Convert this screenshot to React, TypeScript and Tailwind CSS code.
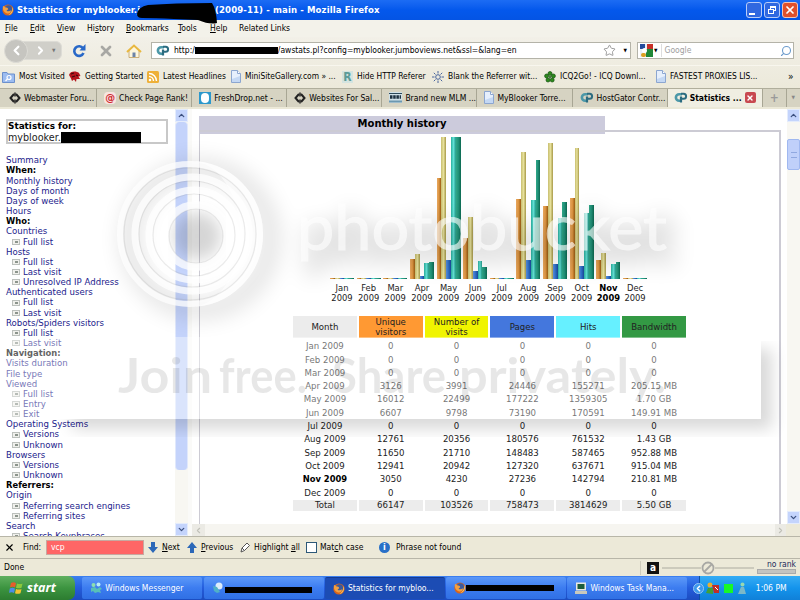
import React from 'react';
import { ChevronDown, ChevronUp, ChevronLeft, ChevronRight, Star, Search, X } from 'lucide-react';
import clsx from 'clsx';

const months = [
  { name: 'Jan', bars: [1, 1, 1, 1, 1], row: ['0', '0', '0', '0', '0'] },
  { name: 'Feb', bars: [1, 1, 1, 1, 1], row: ['0', '0', '0', '0', '0'] },
  { name: 'Mar', bars: [1, 1, 1, 1, 1], row: ['0', '0', '0', '0', '0'] },
  { name: 'Apr', bars: [20, 25, 3, 16, 17], row: ['3126', '3991', '24446', '155271', '205.15 MB'] },
  { name: 'May', bars: [101, 142, 19, 142, 142], row: ['16012', '22499', '177222', '1359305', '1.70 GB'] },
  { name: 'Jun', bars: [41, 62, 8, 18, 12], row: ['6607', '9798', '73190', '170591', '149.91 MB'] },
  { name: 'Jul', bars: [1, 1, 1, 1, 1], row: ['0', '0', '0', '0', '0'] },
  { name: 'Aug', bars: [80, 127, 19, 79, 119], row: ['12761', '20356', '180576', '761532', '1.43 GB'] },
  { name: 'Sep', bars: [73, 136, 15, 61, 77], row: ['11650', '21710', '148483', '587465', '952.88 MB'] },
  { name: 'Oct', bars: [81, 131, 13, 66, 74], row: ['12941', '20942', '127320', '637671', '915.04 MB'] },
  { name: 'Nov', bars: [19, 26, 3, 15, 17], row: ['3050', '4230', '27236', '142794', '210.81 MB'], current: true },
  { name: 'Dec', bars: [1, 1, 1, 1, 1], row: ['0', '0', '0', '0', '0'] },
];

const barColors = [
  'bg-linear-to-r from-[#e8a860] via-[#dc9440] to-[#9a5c10]',
  'bg-linear-to-r from-[#c8be70] via-[#e6e09a] to-[#a89a48]',
  'bg-linear-to-r from-[#5a90dc] via-[#3070c8] to-[#1a4898]',
  'bg-linear-to-r from-[#28b0a0] via-[#60e0d4] to-[#209888]',
  'bg-linear-to-r from-[#30a888] via-[#209078] to-[#0c6850]',
];

const columns = [
  { label: 'Month', color: 'bg-[#ececec]' },
  { label: 'Unique visitors', color: 'bg-[#ff9933]' },
  { label: 'Number of visits', color: 'bg-[#f0f400]' },
  { label: 'Pages', color: 'bg-[#4477dd]' },
  { label: 'Hits', color: 'bg-[#66f0ff]' },
  { label: 'Bandwidth', color: 'bg-[#339944]' },
];

// h = heading, l = link, s = indented sub link
const sideMenu: [string, string][] = [
  ['l', 'Summary'], ['h', 'When:'], ['l', 'Monthly history'], ['l', 'Days of month'], ['l', 'Days of week'], ['l', 'Hours'],
  ['h', 'Who:'], ['l', 'Countries'], ['s', 'Full list'], ['l', 'Hosts'], ['s', 'Full list'], ['s', 'Last visit'],
  ['s', 'Unresolved IP Address'], ['l', 'Authenticated users'], ['s', 'Full list'], ['s', 'Last visit'],
  ['l', 'Robots/Spiders visitors'], ['s', 'Full list'], ['s', 'Last visit'], ['h', 'Navigation:'], ['l', 'Visits duration'],
  ['l', 'File type'], ['l', 'Viewed'], ['s', 'Full list'], ['s', 'Entry'], ['s', 'Exit'], ['l', 'Operating Systems'],
  ['s', 'Versions'], ['s', 'Unknown'], ['l', 'Browsers'], ['s', 'Versions'], ['s', 'Unknown'], ['h', 'Referrers:'],
  ['l', 'Origin'], ['s', 'Referring search engines'], ['s', 'Referring sites'], ['l', 'Search'], ['s', 'Search Keyphrases'],
];

const Firefox = () => (
  <svg viewBox="0 0 12 12" className="w-3 h-3 shrink-0">
    <circle cx="6" cy="6" r="5.6" fill="#d8641c" />
    <circle cx="6.4" cy="4.9" r="3.6" fill="#3c5a9c" />
    <path d="M1 2c1 .3 2 .6 2.6 1.6 1.6-.4 2.4.6 2.6 1.6L4.6 6.4c.8 1.4 3 1 4.2-.2C9.400 9 6.600 10 4.500 9.200 2 8.500.300 5.500 1 2z" fill="#f4a040" />
    <path d="M10.300 3c1.600 3 .200 7.500-4 8 2.500-1.500 4.300-4 4-8z" fill="#f6c860" />
  </svg>
);

const CPanel = () => (
  <svg viewBox="0 0 14 11" className="w-[14px] h-[11px] shrink-0" fill="none">
    <path d="M8 2.200H5.200a3.300 3.300 0 0 0 0 6.600H6" stroke="#4c98a8" strokeWidth="2.600" />
    <path d="M7 10.500V4.500" stroke="#2c6c80" strokeWidth="2.200" />
    <path d="M7 1.800h2.600a2.500 2.500 0 0 1 0 5H8" stroke="#2c6c80" strokeWidth="2" />
  </svg>
);

const Page = () => (
  <svg viewBox="0 0 10 13" className="w-[10px] h-[13px] shrink-0">
    <path d="M.5.5h6l3 3v9h-9z" fill="#e6effc" stroke="#8ca6d0" />
    <path d="M6.500.5v3h3" fill="#fff" stroke="#8ca6d0" />
    <path d="M1 9l8-3v6H1z" fill="#c4d8f4" />
  </svg>
);

const Diamond = () => (
  <svg viewBox="0 0 12 12" className="w-3 h-3 shrink-0" fill="none" stroke="#222" strokeWidth="2">
    <path d="M5 2L1.500 6L5 10M7 2l3.500 4L7 10" />
    <path d="M6 .5v4M6 7.500v4" strokeWidth="1.500" />
  </svg>
);

const Folder = () => (
  <svg viewBox="0 0 13 12" className="w-[13px] h-3">
    <path d="M.5 1.500h4.500l1 1.500h6.500v8.500H.5z" fill="#9cbcf0" stroke="#6c90cc" />
    <circle cx="7" cy="6.500" r="2" fill="none" stroke="#fff" strokeWidth="1.200" />
    <path d="M5.500 8L3.500 10" stroke="#fff" strokeWidth="1.300" />
  </svg>
);

const Started = () => (
  <svg viewBox="0 0 13 12" className="w-[13px] h-3">
    <path d="M1 4C2 0 8-.5 11 2l1.500 3-2 .5L12 8 8.500 8 8 11 6 8.500 4 10 3 7.500z" fill="#b4141c" />
    <path d="M3 3l3-1M4 6l3-1M8 4l2 1" stroke="#3c0a0c" strokeWidth="1.200" />
  </svg>
);

const Feed = () => (
  <svg viewBox="0 0 12 12" className="w-3 h-3" fill="none" stroke="#fff" strokeWidth="1.400">
    <rect width="12" height="12" rx="1.500" fill="#eeb038" stroke="none" />
    <path d="M2 5.500a4.500 4.500 0 0 1 4.500 4.500M2 2.500A7.500 7.500 0 0 1 9.500 10" />
    <circle cx="3" cy="9" r=".6" />
  </svg>
);

const Sun = () => (
  <svg viewBox="0 0 12 12" className="w-3 h-3" fill="none" stroke="#48649c">
    <circle cx="6" cy="6" r="2.300" />
    <path d="M6 0v2.500M6 9.500V12M0 6h2.500M9.500 6H12M1.800 1.800l1.700 1.700M8.500 8.500l1.700 1.700M10.200 1.800L8.500 3.500M3.500 8.500l-1.700 1.700" />
  </svg>
);

const Clover = () => (
  <svg viewBox="0 0 12 12" className="w-3 h-3">
    <g fill="#2c8a1c" stroke="#145010" strokeWidth=".7">
      <circle cx="6" cy="2.500" r="2" /><circle cx="2.600" cy="5" r="2" /><circle cx="9.400" cy="5" r="2" />
      <circle cx="4" cy="9" r="2" /><circle cx="8.200" cy="9" r="2" />
    </g>
    <circle cx="6" cy="6" r="1" fill="#145010" />
  </svg>
);

const LetterR = () => <span className="w-[11px] h-3 bg-[#d4e4e0] text-[#5c9c98] font-bold text-[12px] leading-3 text-center">R</span>;

const bookmarks = [
  { icon: <Folder />, label: 'Most Visited', width: 'w-[66px]' },
  { icon: <Started />, label: 'Getting Started', width: 'w-[79px]' },
  { icon: <Feed />, label: 'Latest Headlines', width: 'w-[84px]' },
  { icon: <Page />, label: 'MiniSiteGallery.com » ...', width: 'w-[111px]' },
  { icon: <LetterR />, label: 'Hide HTTP Referer', width: 'w-[90px]' },
  { icon: <Sun />, label: 'Blank the Referrer wit...', width: 'w-[112px]' },
  { icon: <Clover />, label: 'ICQ2Go! - ICQ Downl...', width: 'w-[112px]' },
  { icon: <Page />, label: 'FASTEST PROXIES LIS...', width: 'w-[132px]' },
];

const At = () => <span className="w-3 h-3 rounded-sm bg-[#f8e4e0] text-[#d02c34] text-[11px] leading-[11px] font-bold text-center">@</span>;
const Drop = () => <span className="w-3 h-3 bg-[#2c98cc] grid place-items-center shrink-0"><i className="w-2 h-2.5 rounded-full bg-white" /></span>;
const Mlm = () => (
  <svg viewBox="0 0 13 11" className="w-[13px] h-[11px]">
    <rect width="13" height="11" fill="#cfe0e8" />
    <path d="M0 9.500h13" stroke="#6c98b0" strokeWidth="2" />
    <path d="M0 1.500h13" stroke="#2c4858" />
    <path d="M1 5h11" stroke="#1c3040" strokeWidth="3.500" strokeDasharray="2.500 .7" />
  </svg>
);

const tabs = [
  { icon: <Diamond />, label: 'Webmaster Foru...' },
  { icon: <At />, label: 'Check Page Rank!' },
  { icon: <Drop />, label: 'FreshDrop.net - ...' },
  { icon: <Diamond />, label: 'Websites For Sal...' },
  { icon: <Mlm />, label: 'Brand new MLM ...' },
  { icon: <Page />, label: 'MyBlooker Torre...' },
  { icon: <CPanel />, label: 'HostGator Contr...' },
];

const menus = [
  ['', 'F', 'ile', 'w-[25px]'], ['', 'E', 'dit', 'w-[27px]'], ['', 'V', 'iew', 'w-[30px]'], ['Hi', 's', 'tory', 'w-[39px]'],
  ['', 'B', 'ookmarks', 'w-[52px]'], ['', 'T', 'ools', 'w-[32px]'], ['', 'H', 'elp', 'w-[29px]'], ['Related Links', '', '', 'w-[60px]'],
];

const TitleBar = () => (
  <div className="h-5 relative flex items-center pl-[2px] pr-[2px] bg-linear-to-b from-[#1c6cf4] via-[#0458ec] to-[#0454e4] text-white font-bold text-[9.5px] whitespace-nowrap">
    <Firefox />
    <span className="ml-[3px] w-[198px] tracking-[0.1px]">Statistics for myblooker.j</span>
    <span className="tracking-[0.12px]">(2009-11) - main - Mozilla Firefox</span>
    <div className="ml-auto flex gap-[2px]">
      <div className="w-4 h-4 rounded-[3px] border border-[#b8ccf8] bg-[#3068e0] flex items-end p-[2px]"><i className="w-[6px] h-[2px] bg-white" /></div>
      <div className="w-4 h-4 rounded-[3px] border border-[#b8ccf8] bg-[#3068e0] relative">
        <i className="absolute left-[5px] top-[3px] w-[6px] h-[5px] border border-t-2 border-white" />
        <i className="absolute left-[3px] top-[6px] w-[6px] h-[5px] border border-white bg-[#3068e0]" />
      </div>
      <div className="w-4 h-4 rounded-[3px] border border-[#f0c4b8] bg-[#e0502c] grid place-items-center"><X size={12} strokeWidth={3.5} /></div>
    </div>
    <svg className="absolute left-[134px] top-0 w-[86px] h-6 z-10" viewBox="0 0 86 24">
      <path d="M3 14Q4 7 14 5Q40 3 78 3Q82 9 83 23Q76 25 64 20L40 19Q20 18 8 18Q3 18 3 14z" fill="#000" />
    </svg>
  </div>
);

const NavBar = () => (
  <div className="h-7 flex items-center text-[8.5px]">
    <div className="relative w-[62px] h-6 flex items-center ml-[4px]">
      <div className="w-6 h-6 rounded-full bg-[#c6c5c0] border border-[#dddcd6] grid place-items-center text-white z-10"><ChevronLeft size={15} strokeWidth={3.5} /></div>
      <div className="-ml-2 w-[42px] h-[19px] rounded-r-md bg-[#d0cfc9] border border-[#dddcd6] flex items-center pl-[13px] text-white">
        <ChevronRight size={13} strokeWidth={3.5} />
        <span className="ml-[5px] text-[#777] text-[5px]">▼</span>
      </div>
    </div>
    <svg viewBox="0 0 14 14" className="w-[14px] h-[14px] ml-[6px]" fill="none">
      <path d="M11 4.300A4.800 4.800 0 1 0 11.500 9" stroke="#2868c8" strokeWidth="2.600" />
      <path d="M13.500 0v6.500H7.500z" fill="#2868c8" />
    </svg>
    <X size={16} strokeWidth={4} className="ml-[12px] text-[#a8a8a4]" />
    <svg viewBox="0 0 16 14" className="w-4 h-[14px] ml-[12px]">
      <path d="M3 6v7.500h10V6L8 2z" fill="#fdf6dc" stroke="#c0a060" strokeWidth=".8" />
      <path d="M1 8L8 1.500 15 8" fill="none" stroke="#e8b840" strokeWidth="2" />
      <path d="M6.500 13V8.500h3V13z" fill="#6c84a8" />
    </svg>
    <div className="ml-[9px] w-[480px] h-[17px] bg-white border border-[#b4b3a8] flex items-center whitespace-nowrap">
      <span className="w-[22px] pl-1"><CPanel /></span>
      <span>http:/</span>
      <i className="w-[83px] h-[7px] bg-black" />
      <span>/awstats.pl?config=myblooker.jumboviews.net&amp;ssl=&amp;lang=en</span>
      <Star size={13} strokeWidth={1.5} className="ml-auto mr-[8px] text-[#888] shrink-0" />
      <span className="text-[5px] mr-[3px]">▼</span>
    </div>
    <div className="ml-[6px] w-[157px] h-[17px] bg-white border border-[#b4b3a8] flex items-center">
      <div className="ml-[2px] w-[13px] h-[13px] relative bg-[#e8f0f8] overflow-hidden">
        <i className="absolute left-0 top-0 w-[5px] h-[5px] bg-[#244c9c]" />
        <i className="absolute right-0 top-0 w-[6px] h-[5px] bg-[#c83028]" />
        <i className="absolute right-0 top-[5px] w-[7px] h-2 bg-[#208838]" />
        <i className="absolute left-[2px] top-[4px] w-[5px] h-[5px] rounded-full bg-white" />
        <i className="absolute left-[1px] bottom-0 w-[5px] h-[4px] rounded-full bg-[#dca020]" />
      </div>
      <span className="text-[5px] ml-[1px]">▼</span>
      <span className="ml-[4px] pl-[2px] border-l border-[#ddd] text-[#a0a0a0]">Google</span>
      <Search size={12} strokeWidth={2.2} className="ml-auto mr-[1px] -scale-x-100 text-[#6c9ccc]" />
    </div>
  </div>
);

const Scroller = ({ children, className }: { children?: React.ReactNode; className?: string }) => (
  <div className={clsx('flex flex-col w-[13px] bg-[#f8f7f2] shrink-0', className)}>
    <div className="h-[13px] grid place-items-center bg-[#c4d4fc] border border-[#e4ecfc] text-[#3c5080]"><ChevronUp size={9} strokeWidth={3.5} /></div>
    <div className="flex-1 flex flex-col">{children}</div>
    <div className="h-[13px] grid place-items-center bg-[#c4d4fc] border border-[#e4ecfc] text-[#3c5080]"><ChevronDown size={9} strokeWidth={3.5} /></div>
  </div>
);

const Sidebar = () => (
  <div className="w-[188px] flex bg-white shrink-0">
    <div className="w-[175px] pl-[6px] pt-[10px] overflow-hidden text-[8.6px] whitespace-nowrap">
      <div className="w-[162px] h-[25px] border-2 border-[#c8c8c8] text-black leading-[11px]">
        <p className="font-bold text-[8.9px]">Statistics for:</p>
        <p className="flex items-center h-[10px] text-[9.6px] text-[#222]">myblooker.<i className="w-[80px] h-[11px] bg-black" /></p>
      </div>
      <ul className="mt-[11px]">
        {sideMenu.map(([kind, label], i) => (
          <li
            key={i}
            className={clsx(
              'h-[10.17px] leading-[10.17px] flex items-center',
              kind === 'h' ? 'font-bold text-black text-[8.4px]' : 'text-[#22228c]',
              kind === 's' && 'pl-[6px]'
            )}
          >
            {kind === 's' && (
              <span className="w-2 h-[6px] mr-[3px] border border-[#bcc0bc] bg-[#f0f0ec] grid place-items-center"><i className="w-[3px] h-[2px] bg-[#8c948c]" /></span>
            )}
            {label}
          </li>
        ))}
      </ul>
    </div>
    <Scroller>
      <div className="h-[348px] bg-[#c4d3fb] border-x border-[#e0e8fc] rounded-sm" />
    </Scroller>
  </div>
);

const Chart = () => (
  <div className="ml-[130px] mt-[3px] flex gap-[2.650px]">
    {months.map(m => (
      <div key={m.name} className="w-6">
        <div className="h-[142px] flex items-end">
          {m.bars.map((h, i) => (
            <div key={i} className={clsx('flex-1', barColors[i])} style={{ height: h }} />
          ))}
        </div>
        <p className={clsx('-mx-1 mt-[4px] text-center text-[8.400px] leading-[10px]', m.current ? 'font-bold text-black' : 'text-[#222]')}>
          {m.name}<br />2009
        </p>
      </div>
    ))}
  </div>
);

const Stats = () => (
  <div className="ml-[93px] mt-[13px] w-[393px] text-[8.600px] text-center text-[#222]">
    <div className="grid grid-cols-6 gap-x-[2px] h-[22px] mb-[2px]">
      {columns.map(c => (
        <div key={c.label} className={clsx('grid place-items-center px-2 leading-[10px]', c.color)}>{c.label}</div>
      ))}
    </div>
    {months.map(m => (
      <div key={m.name} className="grid grid-cols-6 gap-x-[2px] h-[13.300px] leading-[13.300px]">
        <span className={clsx(m.current && 'font-bold text-black text-[8.400px]')}>{m.name} 2009</span>
        {m.row.map((v, i) => <span key={i}>{v}</span>)}
      </div>
    ))}
    <div className="grid grid-cols-6 gap-x-[2px] h-[11px] leading-[11px]">
      {['Total', '66147', '103526', '758473', '3814629', '5.50 GB'].map(v => (
        <span key={v} className="bg-[#ececec]">{v}</span>
      ))}
    </div>
  </div>
);

const slogan = [
  { word: 'Join', x: 118, width: 94 },
  { word: 'free.', x: 219, width: 88 },
  { word: 'Share', x: 332, width: 114 },
  { word: 'privately.', x: 459, width: 207 },
];

const Watermark = () => (
  <svg className="absolute left-0 top-0 w-[800px] h-[427px] pointer-events-none" viewBox="0 110 800 427">
    <defs>
      <filter id="soft" x="-20%" y="-30%" width="140%" height="160%"><feGaussianBlur stdDeviation="11" /></filter>
      <filter id="bandBlur" x="-10%" y="-30%" width="120%" height="160%"><feGaussianBlur stdDeviation="8" /></filter>
      <mask id="outsideBand">
        <rect x="0" y="110" width="800" height="427" fill="#fff" />
        <rect x="0" y="338" width="761" height="82" fill="#000" />
        <rect x="0" y="110" width="761" height="230" fill="#000" />
      </mask>
    </defs>
    <g filter="url(#soft)" opacity=".12">
      <circle cx="200" cy="240" r="70" fill="none" stroke="#000" strokeWidth="18" />
      <text x="306" y="262" fontSize="64" textLength="368" lengthAdjust="spacingAndGlyphs" fontFamily="Lato" stroke="#000" strokeWidth="9">photobucket</text>
    </g>
    <circle cx="197" cy="237" r="24" filter="url(#bandBlur)" opacity=".16" />
    <g fill="none" stroke="#fff" opacity=".75">
      <circle cx="190" cy="235" r="70" strokeWidth="6" />
      <circle cx="192" cy="235" r="57" strokeWidth="7" />
      <circle cx="194" cy="236" r="45" strokeWidth="7" />
      <circle cx="196" cy="237" r="31" strokeWidth="8" />
    </g>
    <path d="M190 162A73 73 0 0 1 190 308A50 73 0 0 0 190 162z" fill="#fff" opacity=".6" />
    <g fill="none" stroke="#888" strokeWidth="1.200" opacity=".16">
      <circle cx="190" cy="235" r="66" /><circle cx="192" cy="235" r="53" /><circle cx="194" cy="236" r="41" /><circle cx="196" cy="237" r="27" />
    </g>
    <text x="297" y="251" fontSize="62" textLength="370" lengthAdjust="spacingAndGlyphs" fontFamily="Lato" fill="#fff" stroke="#fff" strokeWidth="1" opacity=".62">photobucket</text>
    <rect x="0" y="338" width="761" height="82" fill="#fff" opacity=".38" />
    <g mask="url(#outsideBand)">
      <rect x="72" y="350" width="700" height="80" filter="url(#bandBlur)" opacity=".15" />
    </g>
    <g fontSize="48" fontFamily="Lato" fontWeight="700" opacity=".09">
      {slogan.map(s => (
        <text key={s.word} x={s.x} y="394" textLength={s.width} lengthAdjust="spacingAndGlyphs">{s.word}</text>
      ))}
    </g>
  </svg>
);

const FindBar = () => (
  <div className="h-[22px] border-t border-[#b8b6a8] flex items-center text-[8.500px] whitespace-nowrap">
    <X size={11} strokeWidth={2.5} className="ml-[4px]" />
    <span className="ml-[8px] w-[23px]">Find:</span>
    <div className="w-[98px] h-[15px] bg-[#ff6666] border border-[#c8a8a0] text-white pl-1 leading-[13px]">vcp</div>
    <svg viewBox="0 0 10 11" className="w-[10px] h-[11px] ml-[4px]"><path d="M3 0h4v5h3L5 11 0 5h3z" fill="#2c68b8" /></svg>
    <span className="ml-[4px] w-[25px]"><u>N</u>ext</span>
    <svg viewBox="0 0 10 11" className="w-[10px] h-[11px]"><path d="M3 11h4V6h3L5 0 0 6h3z" fill="#2c68b8" /></svg>
    <span className="ml-[4px] w-[39px]"><u>P</u>revious</span>
    <svg viewBox="0 0 10 11" className="w-[10px] h-[11px]" fill="#fff" stroke="#555"><path d="M1 10l1-4 5-5 2.500 2.500-5 5zM2 6l2.500 2.500" /></svg>
    <span className="ml-[4px] w-[52px]">Highlight <u>a</u>ll</span>
    <i className="w-[11px] h-[11px] border border-[#2c5878] bg-white" />
    <span className="ml-[3px] w-[59px]">Mat<u>c</u>h case</span>
    <span className="w-[11px] h-[11px] rounded-full bg-[#2870c8] text-white font-bold text-center text-[9px] leading-[11px]">i</span>
    <span className="ml-[6px]">Phrase not found</span>
  </div>
);

const StatusBar = () => (
  <div className="h-[18px] border-t border-[#b8b6a8] flex items-center text-[8.500px] shrink-0">
    <span className="ml-[4px]">Done</span>
    <div className="ml-auto w-[160px] h-[14px] border-l border-[#cfccbc] flex items-center">
      <span className="ml-[6px] w-3 h-3 bg-[#111] text-white font-bold text-[10px] leading-3 text-center">a</span>
      <div className="ml-[3px] w-[92px] flex items-center">
        <i className="flex-1 h-[2px] bg-[#cccabc]" />
        <svg viewBox="0 0 14 14" className="w-[14px] h-[14px]" fill="none" stroke="#a8a8a4" strokeWidth="1.800"><circle cx="7" cy="7" r="5.500" /><path d="M3 11l8-8" /></svg>
        <i className="flex-1 h-[2px] bg-[#cccabc]" />
      </div>
      <div className="ml-[3px] w-[39px] flex flex-col -mt-[3px]">
        <span className="-mx-1 pr-1 text-right text-[8.500px] leading-[10px] text-[#1c2c5c] whitespace-nowrap">no rank</span>
        <i className="h-[5px] border border-[#aaa] bg-[#c4c4c0]" />
      </div>
    </div>
  </div>
);

const TaskButton = ({ icon, children, active }: { icon: React.ReactNode; children?: React.ReactNode; active?: boolean }) => (
  <div className={clsx(
    'w-[120px] h-[22px] rounded-[2px] flex items-center gap-[3px] pl-2 whitespace-nowrap shrink-0',
    active ? 'bg-[#1c4cb4] border-t border-[#143c94]' : 'bg-linear-to-b from-[#5c98f8] via-[#3c7cf0] to-[#3070e4]'
  )}>
    {icon}{children}
  </div>
);

const Taskbar = () => (
  <div className="h-6 flex items-center gap-[1.300px] bg-linear-to-b from-[#3c80f0] via-[#245cdc] to-[#1c4cc0] text-white text-[8.500px]">
    <div className="w-[75px] h-6 mr-[6px] rounded-r-[7px] bg-linear-to-b from-[#60b060] via-[#3c9440] to-[#2c7c30] flex items-center pl-[9px] shrink-0">
      <svg viewBox="0 0 14 14" className="w-[14px] h-[14px]">
        <path d="M2 2q3-1.500 5 .300L6 6.500Q4 5 1 6.300z" fill="#e85c2c" /><path d="M8 2.500q3 1.200 5.500 0l-1 4.300q-3 1-5.500 0z" fill="#8cc83c" />
        <path d="M.8 7.500Q4 6 6 7.800L5 12Q3 10.500 0 11.800z" fill="#4c8ce8" /><path d="M7 8q3 1.200 5.500 0l-1 4.300q-3 1-5.500 0z" fill="#f4c430" />
      </svg>
      <span className="ml-1 font-['Open_Sans','Liberation_Sans',sans-serif] font-bold italic text-[12.500px]">start</span>
    </div>
    <TaskButton icon={<svg viewBox="0 0 12 12" className="w-3 h-3"><circle cx="3.500" cy="3" r="2" fill="#8ce0b0" /><circle cx="8.500" cy="2.500" r="2" fill="#b8ecf8" /><path d="M1 6l4-1 2 2 3-2 2 2-2 1 1 3-3-1-3 1-2-2-2 1z" fill="#58c0b8" /></svg>}>
      Windows Messenger
    </TaskButton>
    <TaskButton icon={<svg viewBox="0 0 12 12" className="w-3 h-3"><circle cx="7" cy="4" r="3.500" fill="#dcecfa" /><path d="M1 4l4 1 3 5-3 1-3-2z" fill="#50b0c8" /></svg>}>
      <i className="-ml-[2px] w-[87px] h-[6px] mt-[3px] bg-black" />
    </TaskButton>
    <TaskButton active icon={<Firefox />}>Statistics for mybloo...</TaskButton>
    <TaskButton icon={<Firefox />}><i className="-ml-[3px] w-[88px] h-[6px] bg-black" /></TaskButton>
    <TaskButton icon={<svg viewBox="0 0 12 12" className="w-3 h-3"><path d="M1 .5h10v8H1z" fill="#e8e8e0" /><path d="M2.500 2h7v5h-7z" fill="#1c5c3c" /><path d="M0 9h12v3H0z" fill="#c8c8bc" /></svg>}>
      Windows Task Mana...
    </TaskButton>
    <div className="h-6 flex-1 ml-[10px] relative flex items-center border-l border-[#0c50a8] bg-linear-to-b from-[#34acf4] via-[#1494ec] to-[#1080d8]">
      <span className="absolute -left-[7px] w-[11px] h-[11px] rounded-full bg-[#3c98ec] border border-[#98c8f4] grid place-items-center"><ChevronLeft size={9} strokeWidth={4} /></span>
      <svg viewBox="0 0 14 12" className="ml-[6px] w-[14px] h-3"><circle cx="4" cy="3" r="2.500" fill="#e8b030" /><path d="M0 11l2-5h5v6z" fill="#40a038" /><path d="M6 3h7v8H8z" fill="#c03028" /><path d="M9 5l3 3" stroke="#fff" /></svg>
      <i className="ml-[4px] w-[9px] h-[9px] bg-[#18f828]" />
      <svg viewBox="0 0 10 12" className="ml-[4px] w-[10px] h-3"><circle cx="5.500" cy="2.500" r="2" fill="#98d8b0" /><path d="M1 12l3-7h3l2 7z" fill="#7cb8c8" /></svg>
      <span className="ml-[9px] whitespace-nowrap">1:06 PM</span>
    </div>
  </div>
);

const App: React.FC = () => {
  return (
    <div className="w-[800px] h-[600px] overflow-hidden flex flex-col bg-[#ece9d8] text-black font-['DejaVu_Sans_Condensed','DejaVu_Sans',sans-serif]">
      <TitleBar />
      <div className="h-[17px] flex items-center pl-[5px] text-[8.500px] bg-[#f3f2ea] whitespace-nowrap">
        {menus.map(([before, key, after, width]) => (
          <span key={before + key} className={width}>{before}<u>{key}</u>{after}</span>
        ))}
      </div>
      <div className="bg-linear-to-b from-[#f2f0e8] to-[#ece9da]">
        <NavBar />
        <div className="h-[23px] flex items-center pl-[2px] border-t border-[#f8f6ee] text-[8.400px] whitespace-nowrap">
          {bookmarks.map(b => (
            <div key={b.label} className={clsx('flex items-center gap-[4px] shrink-0', b.width)}>{b.icon}{b.label}</div>
          ))}
          <span className="text-[10px]">»</span>
        </div>
      </div>
      <div className="h-[20px] flex border-t border-[#b0ae9c] bg-[#d6d3c2] text-[8.500px] whitespace-nowrap pl-[2px]">
        {tabs.map(t => (
          <div key={t.label} className="w-[95.100px] flex items-center gap-[3px] pl-[7px] border-r border-[#a8a694] shrink-0">{t.icon}{t.label}</div>
        ))}
        <div className="w-[94px] flex items-center gap-[3px] pl-[6px] bg-[#f0eee2] font-bold shrink-0">
          <CPanel /><span className="-ml-px">Statistics ...</span>
          <span className="w-[11px] h-[11px] rounded-[2px] bg-[#c84850] text-white grid place-items-center"><X size={8} strokeWidth={4} /></span>
        </div>
        <div className="w-[25px] grid place-items-center border-x border-[#a8a694] text-[#999] text-[12px] font-bold">+</div>
        <div className="flex-1 grid place-items-center text-[#888] text-[5px]">▼</div>
      </div>
      <div className="h-[2px] bg-[#ece9d8]" />
      <div className="h-[427px] relative flex font-['DejaVu_Sans',sans-serif]">
        <Sidebar />
        <div className="w-[4px] bg-[#fafaf8]" />
        <div className="flex-1 flex flex-col bg-white">
          <div className="flex-1 min-h-0 flex">
            <div className="flex-1 pl-[7px] pt-[7px] overflow-hidden">
              <div className="w-[406px] h-[14px] bg-[#cccbdc] text-[10px] font-bold text-center leading-[16px]">Monthly history</div>
              <div className="w-[582px] h-[400px] border-2 border-l border-[#cccbd4] relative">
                <div className="w-[405px] h-0 border-t-2 border-[#cccbdc]" />
                <Chart />
                <Stats />
              </div>
            </div>
            <Scroller>
              <div className="mt-[17px] h-[31px] bg-[#c0d0fa] border border-[#a0b8f0] rounded-[2px] grid place-items-center">
                <i className="w-[6px] h-[6px] border-y border-[#90a8e0]" />
              </div>
            </Scroller>
          </div>
          <div className="h-[12px] flex justify-between bg-[#f6f5f0] text-[#c0c0b8]">
            <div className="w-[13px] bg-[#ebeae4] grid place-items-center"><ChevronLeft size={9} strokeWidth={3} /></div>
            <div className="ml-auto w-[11px] bg-[#ebeae4] grid place-items-center"><ChevronRight size={9} strokeWidth={3} /></div>
            <div className="w-[14px] bg-[#ece9d8]" />
          </div>
        </div>
        <Watermark />
      </div>
      <FindBar />
      <StatusBar />
      <Taskbar />
    </div>
  );
};

export default App;
